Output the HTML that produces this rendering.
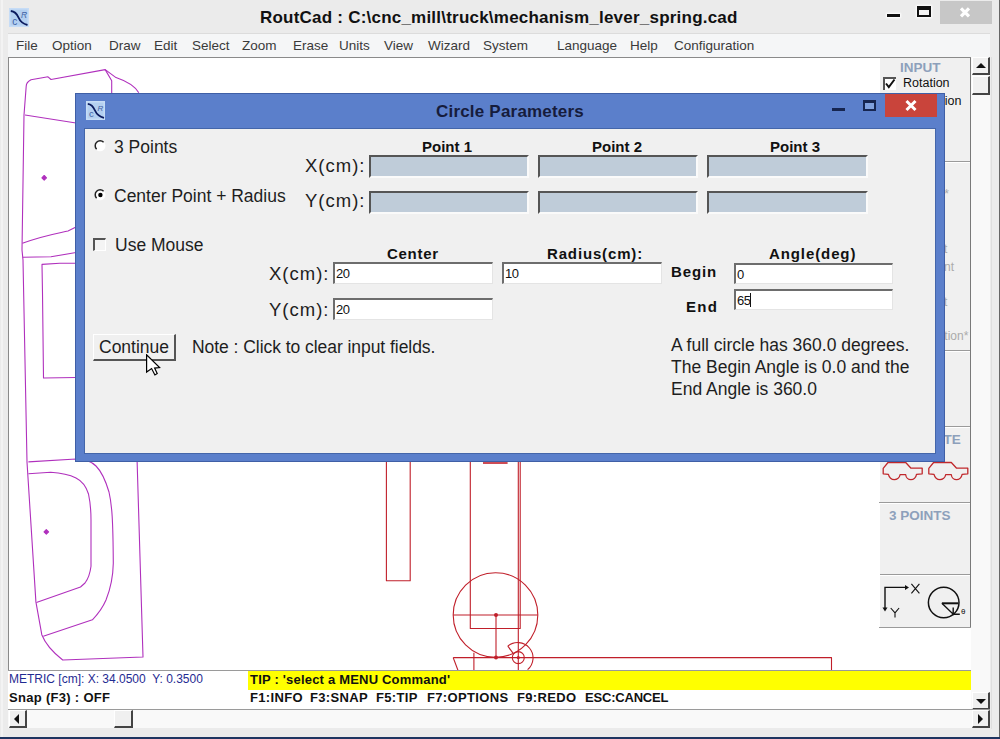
<!DOCTYPE html>
<html><head><meta charset="utf-8">
<style>
*{margin:0;padding:0;box-sizing:border-box}
html,body{width:1000px;height:739px;overflow:hidden;background:#ebebeb;font-family:"Liberation Sans",sans-serif}
.a{position:absolute}
.t{position:absolute;white-space:nowrap;line-height:1}
#title{left:0;top:0;width:1000px;height:34px;background:#ebebeb}
#menu{left:8px;top:33px;width:982px;height:24px;background:#f5f6f7;border-top:1px solid #dcdcdc}
#menu span{position:absolute;top:5px;font-size:13.5px;color:#3a3a3a;line-height:14px}
#canvas{left:8px;top:57px;width:963px;height:613px;background:#fff;border-top:1px solid #8a8a8a;border-left:1px solid #8a8a8a;overflow:hidden}
#dlg{left:75px;top:93px;width:870px;height:369px;background:#5b7fcb;border:1px solid #3f5fa6}
#client{left:84px;top:128px;width:852px;height:326px;background:#f0f0f0;border:1px solid #4466aa}
.lbl{font-size:17.5px;color:#1e1e1e}
.xl{font-size:18.5px;letter-spacing:1px}
.hd{font-size:15px;font-weight:bold;color:#111}
.dis{position:absolute;background:#bfccd9;border-top:2px solid #555;border-left:2px solid #555;border-bottom:2px solid #fafafa;border-right:2px solid #fafafa}
.inp{position:absolute;background:#fff;border-top:2px solid #6d6d6d;border-left:2px solid #6d6d6d;border-bottom:1px solid #e4e4e4;border-right:1px solid #e4e4e4;font-size:13px;color:#111;padding-left:1px;line-height:20px;letter-spacing:-0.6px}
</style></head><body>
<div id="title" class="a"></div>
<div class="t" style="left:260px;top:9px;font-size:17px;letter-spacing:0.22px;font-weight:bold;color:#111">RoutCad : C:\cnc_mill\truck\mechanism_lever_spring.cad</div>

<svg class="a" style="left:9px;top:8px" width="20" height="19" viewBox="0 0 20 19"><rect x="0" y="0" width="20" height="19" fill="#c6dcf6"/><rect x="1.5" y="1.5" width="17" height="16" fill="#b3cff0"/><path d="M1.8 3 C6 3.5 8 6 9.5 9.5 C11 13 13 15.5 18.5 17" stroke="#0b1a5e" stroke-width="1.9" fill="none"/><text x="3.2" y="16.5" font-size="10" font-family="Liberation Sans" fill="#3f62a5">c</text><text x="12" y="10" font-size="8.5" font-style="italic" font-family="Liberation Sans" fill="#3f62a5">R</text></svg>
<div class="a" style="left:887px;top:14px;width:13px;height:3px;background:#111;box-shadow:0 0 2px 1px #fff"></div>
<div class="a" style="left:917px;top:6px;width:14px;height:11px;border:2px solid #111;border-top-width:4px;background:#f4f4f4;box-shadow:0 0 2px 1px #fff"></div>
<div class="a" style="left:940px;top:1px;width:52px;height:23px;background:#c7c7c7"></div>
<svg class="a" style="left:958px;top:6px" width="14" height="12" viewBox="0 0 14 12"><path d="M3 2.3 L11 10.3 M11 2.3 L3 10.3" stroke="#fff" stroke-width="3.2"/></svg>
<div id="menu" class="a">
<span style="left:8px">File</span>
<span style="left:44px">Option</span>
<span style="left:101px">Draw</span>
<span style="left:146px">Edit</span>
<span style="left:184px">Select</span>
<span style="left:234px">Zoom</span>
<span style="left:285px">Erase</span>
<span style="left:331px">Units</span>
<span style="left:376px">View</span>
<span style="left:420px">Wizard</span>
<span style="left:475px">System</span>
<span style="left:549px">Language</span>
<span style="left:622px">Help</span>
<span style="left:666px">Configuration</span>
</div>
<div id="canvas" class="a"></div>
<svg class="a" style="left:0;top:0" width="1000" height="739" viewBox="0 0 1000 739">
<defs><clipPath id="cc"><rect x="9" y="58" width="962" height="612"/></clipPath></defs>
<g clip-path="url(#cc)" fill="none" stroke-width="1.1" stroke-linejoin="round">
<g stroke="#b030bd">
<path d="M138.8 92.7 C134 85 126 81 116 77.6 L105.2 69.6 L51 79.5 L48 76.8 L31 79.8 C27 82 26.2 84 26.2 86.2 L24 115 L22 250 L23 260 L27 462 L35.9 601.9 L41.8 634.7 C45 643 50 650 62.7 660 L143 657 L137.1 461"/>
<path d="M105.2 69.6 L111.7 80.8 L111.7 95"/>
<path d="M25 115 L76 123"/>
<path d="M22.4 243.3 C45 235 60 233 68 231 L76 227"/>
<path d="M22.6 257.3 L51 256.8 L76 252.5"/>
<path d="M76 263.3 L59.8 263.3 L42 264.4 L42.5 293.6 L43.5 378 L76 377.5"/>
<path d="M28.4 461.9 L76 459 C86 459 92 462 96 466 C102 472 106 482 109 492 C112 505 113 520 113.3 563.2 C113 578 110 590 106 600 C103 607 98 614 92.4 619.8 L43.3 636.2"/>
<path d="M28.4 473.8 L50.7 472.3 C62 473 70 475 76 478 C82 481 86 486 88.5 494 C90 501 91 510 91 520 L91 566.2 C90 574 88 579 85 583 L80.5 587 L36.4 602.5"/>
<path d="M44.2 175.5 L46.5 177.8 L44.2 180.1 L41.9 177.8Z" fill="#b030bd"/>
<path d="M46.3 529.6 L48.6 531.9 L46.3 534.2 L44 531.9Z" fill="#b030bd"/>
</g>
<g stroke="#c01f2a">
<path d="M386.4 455 L386.4 580.7 L410.2 580.7 L410.2 455"/>
<path d="M470.3 455 L470.3 628.5 L520.2 628.5 L520.2 455"/>
<path d="M518.3 455 L518.3 672"/>
<path d="M483 463 L507.6 463" stroke-width="1.6"/>
<circle cx="495.5" cy="615" r="42.3"/>
<path d="M453.2 615 L537.8 615"/>
<path d="M496 615 L496 657.6"/>
<path d="M453.2 657.6 L831.5 657.6 L831.5 672"/>
<path d="M453.2 657.6 L458.6 672"/>
<path d="M473.9 652.8 L473.9 672"/>
<circle cx="518.3" cy="657.6" r="6"/>
<path d="M507.8 646.2 A15.3 15.3 0 1 1 527.6 669.6"/>
<path d="M507.8 646.2 L513.2 653.4"/>
<circle cx="496" cy="615" r="2" fill="#c01f2a" stroke="none"/>
<circle cx="496" cy="657.6" r="2" fill="#c01f2a" stroke="none"/>
<circle cx="518.3" cy="657.6" r="1.6" fill="#c01f2a" stroke="none"/>
</g>
</g>
</svg>


<!-- right panel -->
<div class="a" style="left:880px;top:58px;width:91px;height:570px;background:#f0f0f0"></div>
<div class="a" style="left:970px;top:58px;width:1px;height:570px;background:#7a7a7a"></div>
<div class="a" style="left:880px;top:161px;width:90px;height:1px;background:#9a9a9a"></div>
<div class="a" style="left:880px;top:162px;width:90px;height:1px;background:#fff"></div>
<div class="a" style="left:880px;top:350px;width:90px;height:1px;background:#9a9a9a"></div>
<div class="a" style="left:880px;top:351px;width:90px;height:1px;background:#fff"></div>
<div class="a" style="left:880px;top:426px;width:90px;height:1px;background:#9a9a9a"></div>
<div class="a" style="left:880px;top:427px;width:90px;height:1px;background:#fff"></div>
<div class="a" style="left:879px;top:502px;width:91px;height:1px;background:#9a9a9a"></div>
<div class="a" style="left:880px;top:503px;width:90px;height:1px;background:#fff"></div>
<div class="a" style="left:880px;top:574px;width:90px;height:1px;background:#9a9a9a"></div>
<div class="a" style="left:880px;top:575px;width:90px;height:1px;background:#fff"></div>
<div class="a" style="left:879px;top:627px;width:92px;height:1px;background:#9a9a9a"></div>
<div class="t" style="left:900px;top:61px;font-size:13.5px;font-weight:bold;color:#8da0bb">INPUT</div>
<div class="a" style="left:883px;top:77px;width:13px;height:13px;background:#fff;border-top:2px solid #555;border-left:2px solid #555"></div>
<svg class="a" style="left:884px;top:78px" width="12" height="12" viewBox="0 0 12 12"><path d="M2 5.5 L4.8 9 L10.5 1.5" stroke="#111" stroke-width="2" fill="none"/></svg>
<div class="t" style="left:903px;top:77px;font-size:12.5px;color:#111">Rotation</div>
<div class="t" style="left:900px;top:95px;font-size:12.5px;color:#111">Translation</div>
<div class="t" style="left:911px;top:188px;font-size:12px;color:#ababab">Points*</div>
<div class="t" style="left:920px;top:243px;font-size:12px;color:#ababab">Point</div>
<div class="t" style="left:906px;top:261px;font-size:12px;color:#ababab">Segment</div>
<div class="t" style="left:920px;top:296px;font-size:12px;color:#ababab">Point</div>
<div class="t" style="left:919px;top:330px;font-size:12px;color:#ababab">Rotation*</div>
<div class="t" style="left:889px;top:509px;font-size:13.5px;font-weight:bold;color:#8da0bb">3 POINTS</div>
<div class="t" style="left:880px;top:433px;font-size:13.5px;font-weight:bold;color:#8da0bb">TRANSLATE</div>

<svg class="a" style="left:878px;top:455px" width="94" height="30" viewBox="878 455 94 30">
<g fill="none" stroke="#c0282c" stroke-width="1.3" stroke-linejoin="round">
<path id="car" d="M888 462.5 L905.7 462.5 L911 468.2 L922.2 468.2 L922.2 473.8 L916.5 474.3 C916 477.5 913.5 479.6 910.9 479.6 C908.3 479.6 906 477.5 905.7 474.7 L900.1 474.7 C899.6 477.5 897 479.6 894.4 479.6 C891.8 479.6 889.2 477.5 888.4 474.3 L883.2 473.8 L883.2 468.3 Z"/>
<use href="#car" x="45.6"/>
</g></svg>
<svg class="a" style="left:878px;top:578px" width="94" height="47" viewBox="878 578 94 47">
<g fill="none" stroke="#111" stroke-width="1.4">
<path d="M885 609 L885 587.4 L905.5 587.4"/>
<path d="M911.4 583.8 L919.4 593.4 M919.4 583.8 L911.4 593.4" stroke-width="1.1"/>
<path d="M890.7 608 L895 612.8 L899.1 608 M895 612.8 L895 617.5" stroke-width="1.1"/>
<circle cx="943.7" cy="602.5" r="15.3" stroke-width="1.5"/>
<path d="M941.9 603.3 L958.4 603.3" stroke-width="2"/>
<path d="M941.9 603.3 L953.2 614.2 L953.2 607.6 M953.2 614.2 L959.8 614.2"/>
</g>
<path d="M882.5 607.5 L887.5 607.5 L885 611.5Z M905 585 L905 590 L909 587.4Z" fill="#111"/>
<text x="961" y="613.5" font-size="8" font-family="Liberation Sans" fill="#111">θ</text>
</svg>
<!-- vertical scrollbar -->
<div class="a" style="left:971px;top:57px;width:19px;height:652px;background:#f9f9f9"></div>
<div class="a" style="left:972px;top:57px;width:18px;height:18px;background:#f0f0f0;border-right:2px solid #444;border-bottom:2px solid #444;border-top:1px solid #fff;border-left:1px solid #fff"></div>
<svg class="a" style="left:975px;top:62px" width="12" height="7"><path d="M1 6 L6 1 L11 6Z" fill="#111"/></svg>
<div class="a" style="left:972px;top:76px;width:18px;height:19px;background:#f0f0f0;border-right:2px solid #444;border-bottom:2px solid #444;border-top:1px solid #fff;border-left:1px solid #fff"></div>
<div class="a" style="left:972px;top:692px;width:18px;height:18px;background:#f0f0f0;border-right:2px solid #444;border-bottom:2px solid #444;border-top:1px solid #fff;border-left:1px solid #fff"></div>
<svg class="a" style="left:975px;top:698px" width="12" height="7"><path d="M1 1 L6 6 L11 1Z" fill="#111"/></svg>
<!-- status -->
<div class="a" style="left:8px;top:670px;width:963px;height:1px;background:#9a9a9a"></div>
<div class="a" style="left:8px;top:671px;width:963px;height:38px;background:#fff"></div>
<div class="a" style="left:248px;top:671px;width:723px;height:19px;background:#ffff00"></div>
<div class="t" style="left:9px;top:673px;font-size:12px;color:#1f2b92">METRIC [cm]: X: 34.0500&nbsp; Y: 0.3500</div>
<div class="t" style="left:9px;top:691px;font-size:13px;letter-spacing:0.3px;font-weight:bold;color:#111">Snap (F3) : OFF</div>
<div class="t" style="left:250px;top:673px;font-size:13px;letter-spacing:0.2px;font-weight:bold;color:#111">TIP : 'select a MENU Command'</div>
<div class="t" style="left:250px;top:691px;font-size:13px;font-weight:bold;color:#111;letter-spacing:0.35px">F1:INFO</div>
<div class="t" style="left:310px;top:691px;font-size:13px;font-weight:bold;color:#111;letter-spacing:0.35px">F3:SNAP</div>
<div class="t" style="left:376px;top:691px;font-size:13px;font-weight:bold;color:#111;letter-spacing:0.35px">F5:TIP</div>
<div class="t" style="left:427px;top:691px;font-size:13px;font-weight:bold;color:#111;letter-spacing:0.35px">F7:OPTIONS</div>
<div class="t" style="left:517px;top:691px;font-size:13px;font-weight:bold;color:#111;letter-spacing:0.35px">F9:REDO</div>
<div class="t" style="left:585px;top:691px;font-size:13px;font-weight:bold;color:#111;letter-spacing:-0.2px">ESC:CANCEL</div>
<!-- horizontal scrollbar -->
<div class="a" style="left:8px;top:709px;width:982px;height:1px;background:#9a9a9a"></div>
<div class="a" style="left:8px;top:710px;width:982px;height:18px;background:#f9f9f9"></div>
<div class="a" style="left:9px;top:710px;width:18px;height:18px;background:#f0f0f0;border-right:2px solid #444;border-bottom:2px solid #444;border-top:1px solid #fff;border-left:1px solid #fff"></div>
<svg class="a" style="left:13px;top:713px" width="7" height="12"><path d="M6 1 L1 6 L6 11Z" fill="#111"/></svg>
<div class="a" style="left:114px;top:710px;width:19px;height:18px;background:#f0f0f0;border-right:2px solid #444;border-bottom:2px solid #444;border-top:1px solid #fff;border-left:1px solid #fff"></div>
<div class="a" style="left:972px;top:710px;width:18px;height:18px;background:#f0f0f0;border-right:2px solid #444;border-bottom:2px solid #444;border-top:1px solid #fff;border-left:1px solid #fff"></div>
<svg class="a" style="left:977px;top:713px" width="7" height="12"><path d="M1 1 L6 6 L1 11Z" fill="#111"/></svg>
<div class="a" style="left:999px;top:0;width:1px;height:737px;background:#666"></div>
<div class="a" style="left:991px;top:57px;width:1px;height:672px;background:#dedede"></div>
<div class="a" style="left:1px;top:0;width:2px;height:737px;background:#f3f3f3"></div>
<div class="a" style="left:0;top:737px;width:1000px;height:2px;background:#1e3460"></div>

<div id="dlg" class="a"></div>
<div id="client" class="a"></div>
<div class="t" style="left:436px;top:103px;font-size:17px;letter-spacing:0.2px;font-weight:bold;color:#161c3c">Circle Parameters</div>
<div class="a" style="left:885px;top:94px;width:52px;height:23px;background:#c9443b"></div>

<div class="t lbl" style="left:114px;top:139px">3 Points</div>
<div class="t lbl" style="left:114px;top:188px">Center Point + Radius</div>
<div class="t lbl" style="left:115px;top:237px">Use Mouse</div>

<div class="t hd" style="left:422px;top:139px">Point 1</div>
<div class="t hd" style="left:592px;top:139px">Point 2</div>
<div class="t hd" style="left:770px;top:139px">Point 3</div>
<div class="t lbl xl" style="left:305px;top:157px">X(cm):</div>
<div class="t lbl xl" style="left:305px;top:192px">Y(cm):</div>
<div class="dis" style="left:369px;top:155px;width:160px;height:23px"></div>
<div class="dis" style="left:538px;top:155px;width:160px;height:23px"></div>
<div class="dis" style="left:707px;top:155px;width:161px;height:23px"></div>
<div class="dis" style="left:369px;top:191px;width:160px;height:23px"></div>
<div class="dis" style="left:538px;top:191px;width:160px;height:23px"></div>
<div class="dis" style="left:707px;top:191px;width:161px;height:23px"></div>

<div class="t hd" style="left:387px;top:246px;letter-spacing:0.7px">Center</div>
<div class="t hd" style="left:547px;top:246px;letter-spacing:0.85px">Radius(cm):</div>
<div class="t hd" style="left:769px;top:246px;letter-spacing:0.9px">Angle(deg)</div>
<div class="t lbl xl" style="left:269px;top:265px">X(cm):</div>
<div class="t lbl xl" style="left:269px;top:301px">Y(cm):</div>
<div class="inp" style="left:333px;top:262px;width:160px;height:22px">20</div>
<div class="inp" style="left:333px;top:298px;width:160px;height:22px">20</div>
<div class="inp" style="left:502px;top:262px;width:160px;height:22px">10</div>
<div class="t hd" style="left:671px;top:264px;letter-spacing:0.9px">Begin</div>
<div class="t hd" style="left:686px;top:299px;letter-spacing:1.3px">End</div>
<div class="inp" style="left:734px;top:263px;width:159px;height:21px">0</div>
<div class="inp" style="left:734px;top:289px;width:159px;height:21px">65</div>
<div class="a" style="left:750px;top:293px;width:1px;height:14px;background:#111"></div>

<div class="a" style="left:93px;top:334px;width:83px;height:27px;background:#f0f0f0;border-top:1px solid #fff;border-left:1px solid #fff;border-right:2px solid #555;border-bottom:2px solid #555"></div>
<div class="t lbl" style="left:99px;top:339px">Continue</div>
<div class="t lbl" style="left:192px;top:339px;letter-spacing:-0.05px">Note : Click to clear input fields.</div>
<div class="t lbl" style="left:671px;top:337px">A full circle has 360.0 degrees.</div>
<div class="t lbl" style="left:671px;top:359px">The Begin Angle is 0.0 and the</div>
<div class="t lbl" style="left:671px;top:381px">End Angle is 360.0</div>


<svg class="a" style="left:86px;top:101px" width="19" height="19" viewBox="0 0 19 19"><rect x="0" y="0" width="19" height="19" fill="#c6dcf6"/><rect x="1.5" y="1.5" width="16" height="16" fill="#b3cff0"/><path d="M1.8 2.8 C6 3.3 7.5 6 9 9.5 C10.5 13 12.5 15.5 18 16.8" stroke="#0b1a5e" stroke-width="1.8" fill="none"/><text x="3" y="16" font-size="9.5" font-family="Liberation Sans" fill="#3f62a5">c</text><text x="11.5" y="9.5" font-size="8" font-style="italic" font-family="Liberation Sans" fill="#3f62a5">R</text></svg>
<div class="a" style="left:832px;top:108px;width:13px;height:3px;background:#162550"></div>
<div class="a" style="left:863px;top:100px;width:13px;height:11px;border:2px solid #162550;border-top-width:3px;background:#7fa0dd"></div>
<svg class="a" style="left:904px;top:99px" width="14" height="13" viewBox="0 0 14 13"><path d="M2.5 2 L11.5 11 M11.5 2 L2.5 11" stroke="#fff" stroke-width="3"/></svg>
<svg class="a" style="left:93px;top:139px" width="14" height="14" viewBox="0 0 14 14"><circle cx="7" cy="6.8" r="5.5" fill="#fff"/><path d="M10.6 3.3 A4.7 4.7 0 0 0 3.6 10.2" stroke="#222" stroke-width="1.5" fill="none"/></svg>
<svg class="a" style="left:93px;top:188px" width="14" height="14" viewBox="0 0 14 14"><circle cx="7" cy="6.8" r="5.5" fill="#fff"/><path d="M10.6 3.3 A4.7 4.7 0 0 0 3.6 10.2" stroke="#222" stroke-width="1.5" fill="none"/><circle cx="7.4" cy="7" r="2.2" fill="#000"/></svg>
<div class="a" style="left:93px;top:238px;width:13px;height:13px;border-top:2px solid #555;border-left:2px solid #555;border-right:1px solid #fff;border-bottom:1px solid #fff;background:#f4f4f4"></div>

<svg class="a" style="left:146px;top:354px" width="16" height="23" viewBox="0 0 16 23"><path d="M0.6 0.8 L0.6 18 L5.6 14.6 L8.9 21 L11.2 19.6 L8.6 14.1 L13.6 13.6 Z" fill="#fff" stroke="#000" stroke-width="1.2" stroke-linejoin="miter"/></svg>
</body></html>
